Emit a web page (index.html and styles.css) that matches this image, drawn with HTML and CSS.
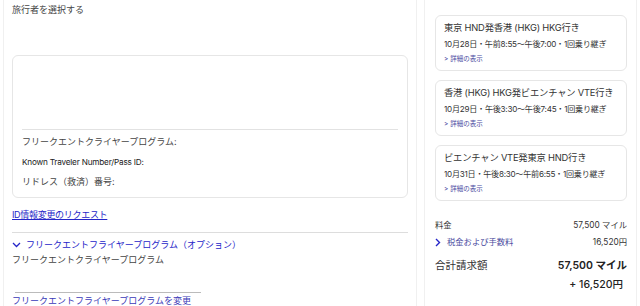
FILE: index.html
```html
<!DOCTYPE html>
<html lang="ja">

<head>
    <meta charset="UTF-8">
    <meta name="viewport" content="width=device-width, initial-scale=1.0">
    <title>旅行者情報</title>
    <link rel="stylesheet" href="styles.css">
</head>

<body>
    <div class="page">
        <!-- left: traveler details -->
        <main class="main">
            <p class="select">旅行者を選択する</p>

            <div class="traveler-box">
                <div class="box-top"></div>
                <p class="row">フリークエントクライヤープログラム:</p>
                <p class="row latin">Known Traveler Number/Pass ID:</p>
                <p class="row">リドレス（救済）番号:</p>
            </div>

            <a class="id-link" href="#">ID情報変更のリクエスト</a>

            <div class="ffp">
                <button class="ffp-toggle">
                    <svg width="9" height="6" viewBox="0 0 9 6"><path d="M1 1l3.5 3.5L8 1" fill="none" stroke="currentColor" stroke-width="1.3"/></svg>
                    フリークエントフライヤープログラム（オプション）
                </button>
                <p class="ffp-name">フリークエントクライヤープログラム</p>
                <div class="ffp-line"></div>
                <a class="ffp-change" href="#">フリークエントフライヤープログラムを変更</a>
            </div>
        </main>

        <!-- right: itinerary summary -->
        <aside class="summary">
            <div class="flight">
                <p class="route">東京 HND発香港 (HKG) HKG行き</p>
                <p class="times">10月28日・午前8:55〜午後7:00・1回乗り継ぎ</p>
                <a class="details" href="#">&gt; 詳細の表示</a>
            </div>
            <div class="flight">
                <p class="route">香港 (HKG) HKG発ビエンチャン VTE行き</p>
                <p class="times">10月29日・午後3:30〜午後7:45・1回乗り継ぎ</p>
                <a class="details" href="#">&gt; 詳細の表示</a>
            </div>
            <div class="flight">
                <p class="route">ビエンチャン VTE発東京 HND行き</p>
                <p class="times">10月31日・午後8:30〜午前6:55・1回乗り継ぎ</p>
                <a class="details" href="#">&gt; 詳細の表示</a>
            </div>

            <div class="fare">
                <div class="fare-row"><span>料金</span><span>57,500 マイル</span></div>
                <div class="fare-row"><a class="tax" href="#"><svg width="6" height="9" viewBox="0 0 6 9"><path d="M1 1l3.5 3.5L1 8" fill="none" stroke="currentColor" stroke-width="1.4"/></svg>税金および手数料</a><span>16,520円</span></div>
                <div class="total">
                    <span class="total-label">合計請求額</span>
                    <div class="total-amount">
                        <span>57,500 マイル</span>
                        <span>+ 16,520円</span>
                    </div>
                </div>
            </div>
        </aside>
    </div>
</body>

</html>
```

FILE: styles.css
```css
/* Basic Style */
body {
    margin: 0;
    background: #fff;
    color: #333;
    font-family: Inter, "Noto Sans CJK JP", sans-serif;
    overflow: hidden;
}

p {
    margin: 0;
}

a {
    color: #2525c8;
}

.page {
    display: flex;
    padding-left: 3px;
    height: 306px;
}

/* Left column */
.main {
    width: 396px;
    padding: 0 8px;
    border-left: 1px solid #f0f0f0;
    border-right: 1px solid #f0f0f0;
}

.select {
    font-size: 9px;
    line-height: 20px;
    color: #444;
}

.traveler-box {
    margin-top: 35px;
    height: 141px;
    border: 1px solid #e6e6e6;
    border-radius: 6px;
    padding: 0 9px;
}

.box-top {
    height: 73px;
    border-bottom: 1px solid #e2e2e2;
}

.row {
    font-size: 9px;
    line-height: 20px;
    color: #444;
}

.box-top + .row {
    margin-top: 2px;
}

.row.latin {
    font-size: 8.2px;
    letter-spacing: -0.2px;
    color: #222;
}

.id-link {
    display: block;
    margin-top: 10px;
    font-size: 9px;
    line-height: 14px;
    letter-spacing: -0.3px;
}

.ffp {
    margin-top: 10px;
    border-top: 1px solid #ddd;
}

.ffp-toggle {
    display: flex;
    align-items: center;
    gap: 5px;
    margin-top: 5px;
    padding: 0;
    background: none;
    border: 0;
    color: #2525c8;
    font-family: Inter, "Noto Sans CJK JP", sans-serif;
    font-size: 9px;
    line-height: 14px;
    cursor: pointer;
}

.ffp-name {
    font-size: 9px;
    line-height: 16px;
    color: #444;
}

.ffp-line {
    width: 186px;
    margin: 24px 0 0 3px;
    border-top: 1px solid #bbb;
}

.ffp-change {
    display: block;
    margin-top: 1px;
    font-size: 9px;
    line-height: 14px;
    color: #3a3ab8;
    text-decoration: none;
}

/* Right column */
.summary {
    width: 192px;
    margin-left: 7px;
    padding: 15px 9px 0 10px;
    border-left: 1px solid #f0f0f0;
    border-right: 1px solid #f0f0f0;
}

.flight {
    height: 54px;
    margin-bottom: 9px;
    padding: 0 8px;
    border: 1px solid #e6e6e6;
    border-radius: 6px;
}

.route {
    margin-top: 4px;
    font-size: 9.3px;
    line-height: 16px;
    color: #333;
    letter-spacing: -0.2px;
}

.times {
    font-size: 8.1px;
    line-height: 16px;
    color: #333;
    letter-spacing: -0.25px;
}

.details {
    display: block;
    font-size: 6.5px;
    line-height: 14px;
    color: #4a4aa0;
    text-decoration: none;
}

.fare {
    margin-top: 16px;
    font-size: 8.3px;
    color: #333;
}

.fare-row {
    display: flex;
    justify-content: space-between;
    line-height: 17px;
}

.tax {
    display: flex;
    align-items: center;
    gap: 6px;
    text-decoration: none;
    color: #4a4aa0;
}

.tax svg {
    color: #2525c8;
}

.total {
    display: flex;
    justify-content: space-between;
    margin-top: 5px;
}

.total-label {
    font-size: 10.5px;
    line-height: 19px;
}

.total-amount {
    display: flex;
    flex-direction: column;
    align-items: flex-end;
    font-size: 10.5px;
    line-height: 19px;
    font-weight: 600;
    color: #222;
}

.total-amount span + span {
    font-weight: 500;
    padding-right: 4px;
}
```
